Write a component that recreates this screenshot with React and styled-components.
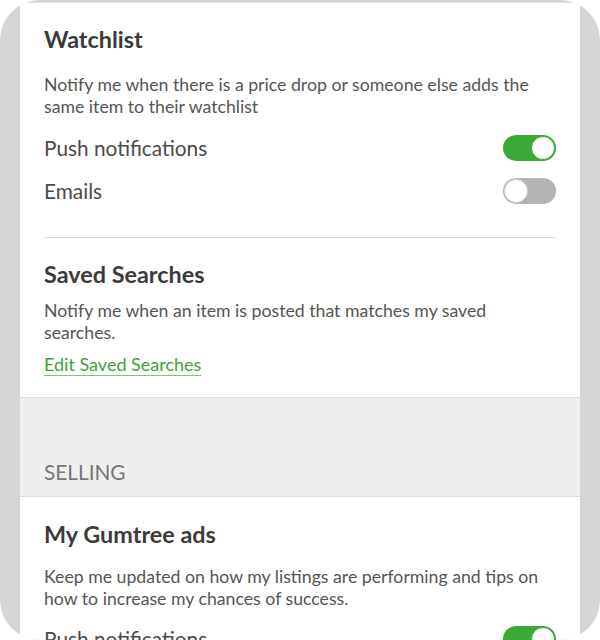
import React from 'react';
import styled, { createGlobalStyle } from 'styled-components';

const GlobalStyle = createGlobalStyle`
  body {
    margin: 0;
    background: #fff;
    font-family: Lato, "Open Sans", sans-serif;
  }
`;

const Frame = styled.div`
  width: 600px;
  height: 640px;
  box-sizing: border-box;
  padding: 2px 20px 0;
  background: #d6d6d6;
  border-radius: 40px;
  overflow: hidden;
`;

const Panel = styled.div`
  height: 100%;
  background: #fff;
  border-top: 1px solid #e2e2e2;
  overflow: hidden;
`;

const Section = styled.section`
  padding: ${(p) => p.$pad || '22px 24px 22px'};
  border-bottom: ${(p) => (p.$border ? '1px solid #dcdcdc' : 'none')};
`;

const Title = styled.h2`
  margin: 0;
  font-size: 23.4px;
  line-height: 28px;
  font-weight: 700;
  color: #3b3b3b;
`;

const Text = styled.p`
  margin: ${(p) => p.$mt || 0}px 0 0;
  font-size: 17.7px;
  line-height: 22px;
  color: #555;
`;

const Row = styled.div`
  display: flex;
  align-items: center;
  justify-content: space-between;
  height: 43px;
`;

const Label = styled.span`
  font-size: 20.8px;
  color: #4a4a4a;
`;

const Rows = styled.div`
  margin-top: ${(p) => p.$mt}px;
`;

const Toggle = styled.div`
  position: relative;
  width: 53px;
  height: 26px;
  border-radius: 13px;
  background: ${(p) => (p.$on ? '#3aa935' : '#b4b4b4')};
  flex-shrink: 0;

  &::after {
    content: '';
    position: absolute;
    top: 1px;
    left: ${(p) => (p.$on ? '28px' : '1px')};
    width: 22px;
    height: 22px;
    border-radius: 50%;
    background: #fff;
    border: 1px solid ${(p) => (p.$on ? '#3aa935' : '#cfcfcf')};
  }
`;

const EditLink = styled.a`
  display: inline-block;
  margin-top: 9px;
  font-size: 18px;
  line-height: 22px;
  color: #3f9f3b;
  text-decoration: underline;
  text-decoration-color: #7cc479;
  text-underline-offset: 4px;
  text-decoration-thickness: 1px;
  cursor: pointer;
`;

const Divider = styled.hr`
  margin: 25px 0 0;
  border: none;
  border-top: 1px solid #dcdcdc;
`;

const Band = styled.div`
  background: #efefef;
  padding: 63px 24px 13px;
  border-bottom: 1px solid #dcdcdc;
  font-size: 20.8px;
  line-height: 22px;
  color: #777;
`;

const App = () => {
  return (
    <>
      <GlobalStyle />
      <Frame>
        <Panel>
          <Section>
            <Title>Watchlist</Title>
            <Text $mt={21}>
              Notify me when there is a price drop or someone else adds the same item to their watchlist
            </Text>
            <Rows $mt={8}>
              <Row>
                <Label>Push notifications</Label>
                <Toggle $on />
              </Row>
              <Row>
                <Label>Emails</Label>
                <Toggle />
              </Row>
            </Rows>
            <Divider />
          </Section>
          <Section $pad="0 24px 22px" $border>
            <Title>Saved Searches</Title>
            <Text $mt={12}>Notify me when an item is posted that matches my saved searches.</Text>
            <EditLink>Edit Saved Searches</EditLink>
          </Section>
          <Band>SELLING</Band>
          <Section $pad="23px 24px 0">
            <Title>My Gumtree ads</Title>
            <Text $mt={18}>
              Keep me updated on how my listings are performing and tips on how to increase my chances of success.
            </Text>
            <Rows $mt={7}>
              <Row>
                <Label>Push notifications</Label>
                <Toggle $on />
              </Row>
            </Rows>
          </Section>
        </Panel>
      </Frame>
    </>
  );
};

export default App;
